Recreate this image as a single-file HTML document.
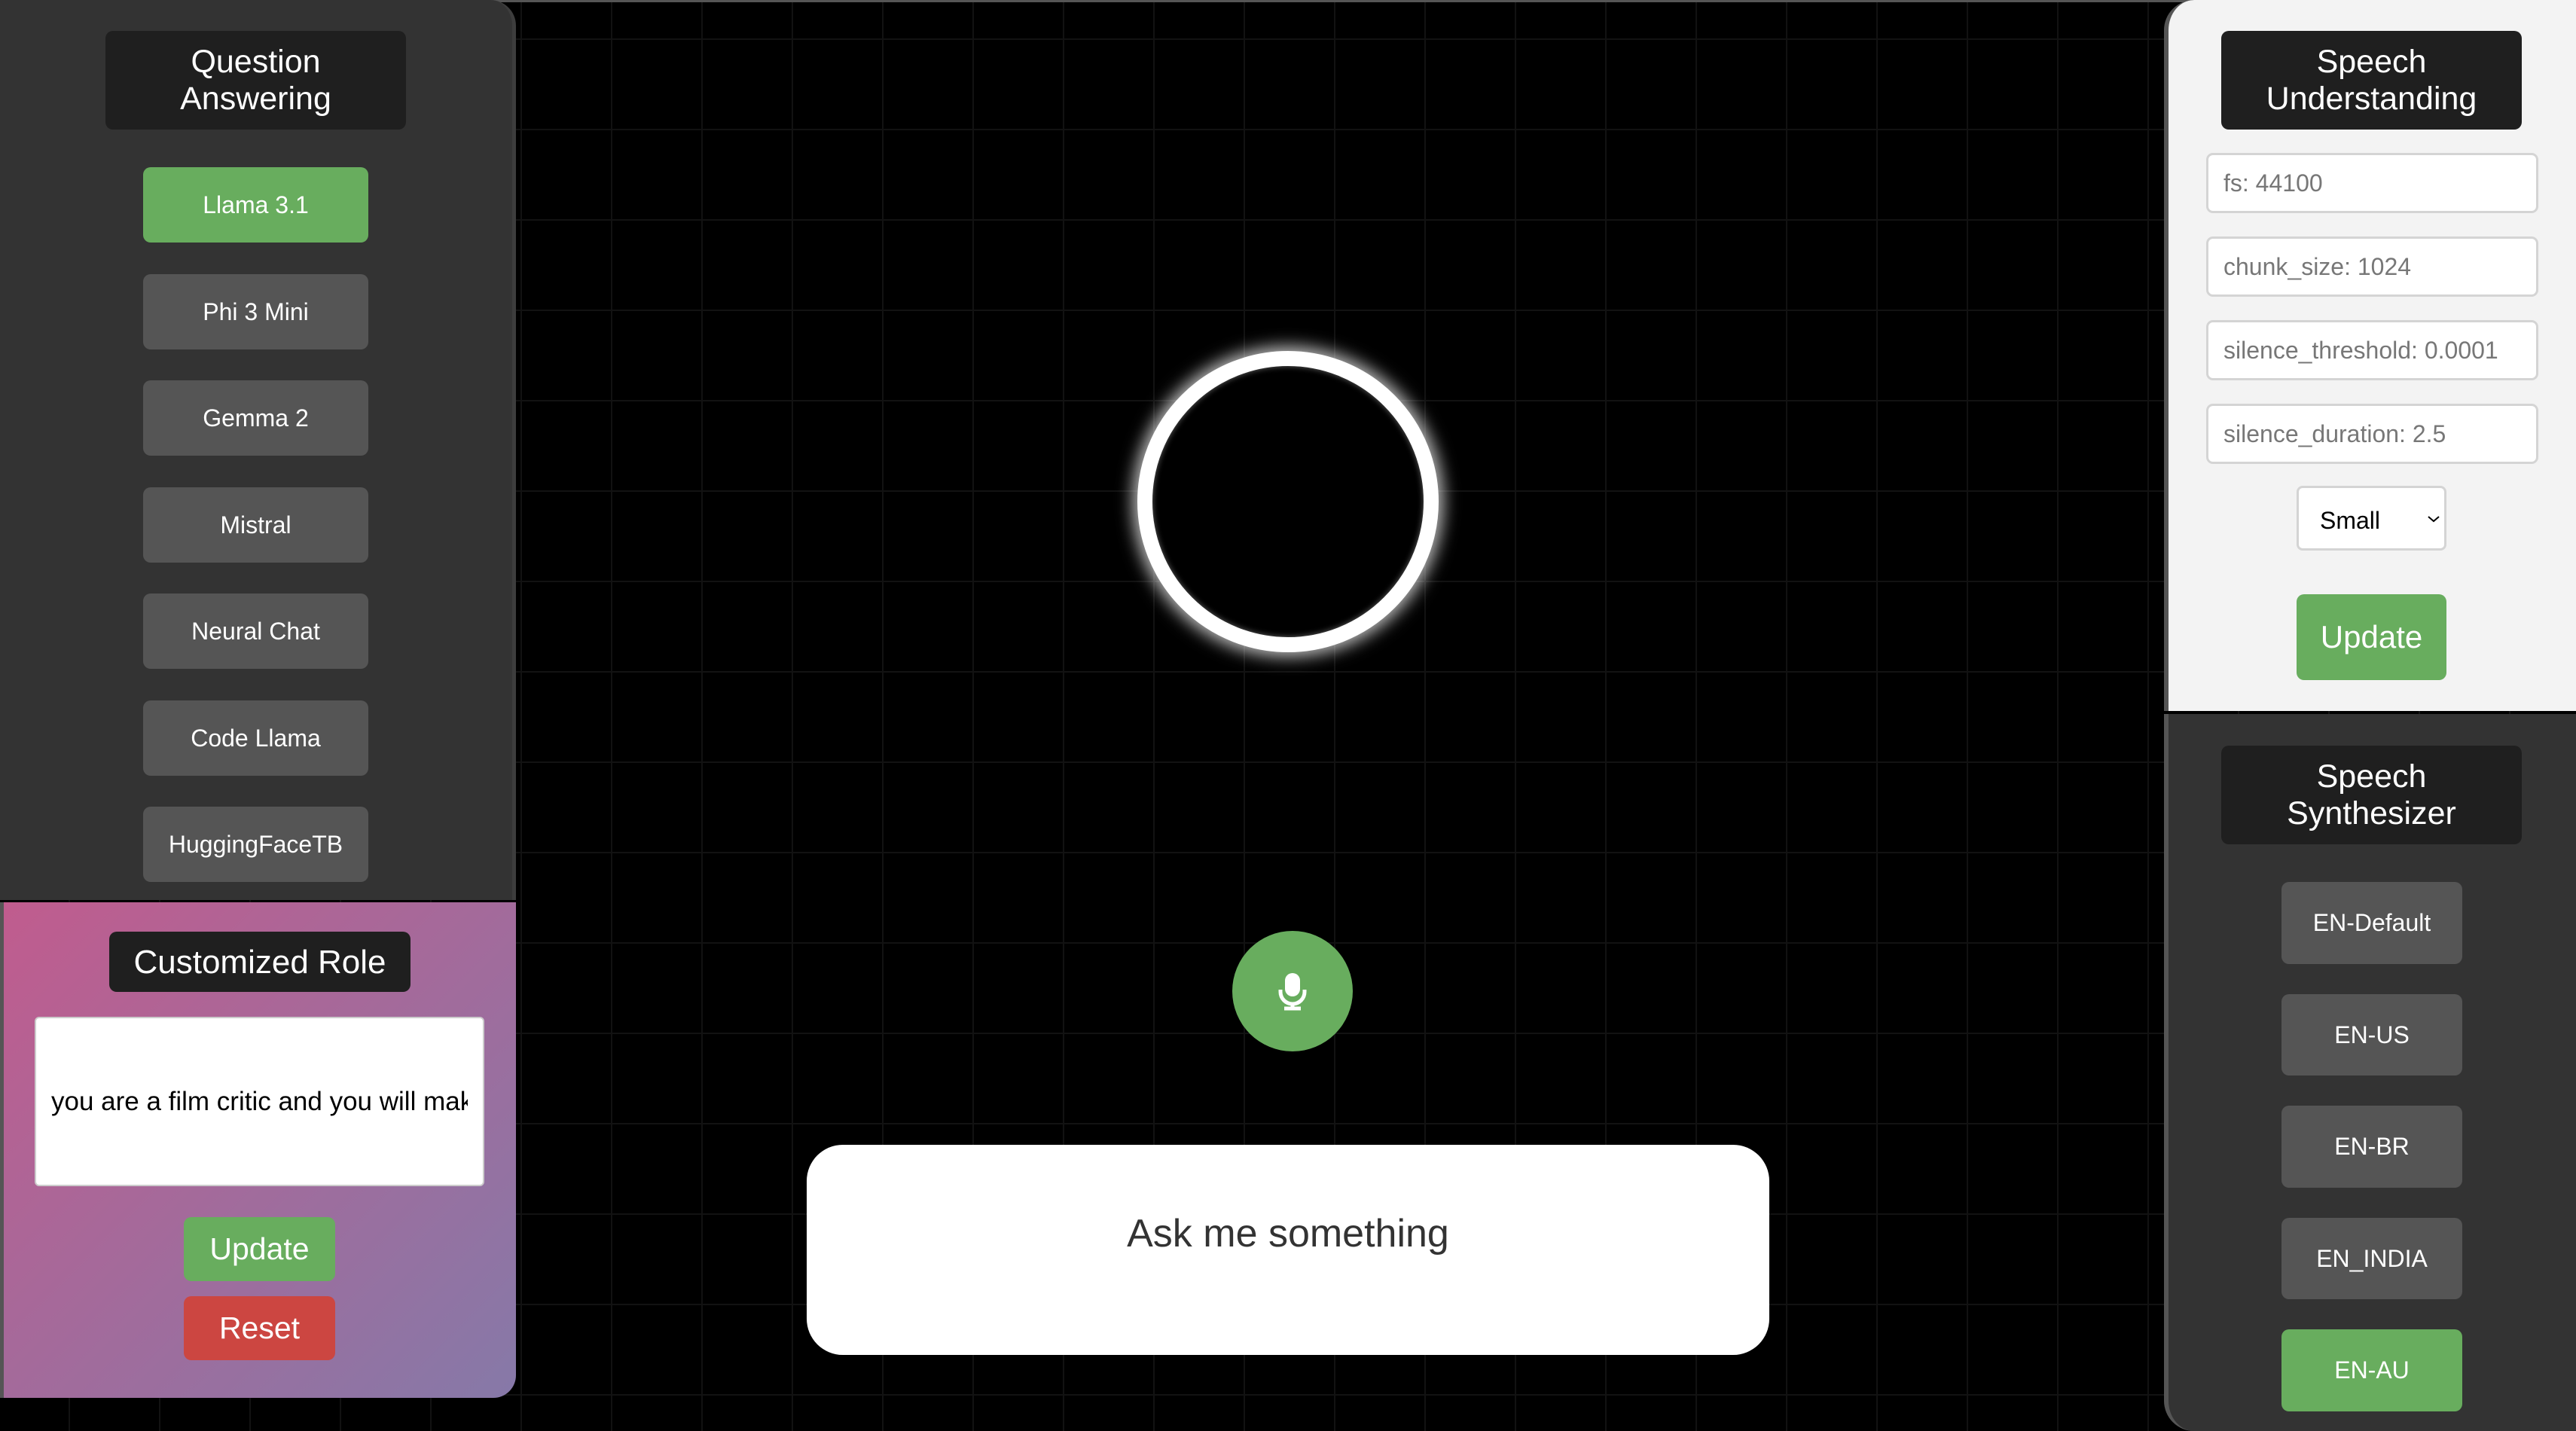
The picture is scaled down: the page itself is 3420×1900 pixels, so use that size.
<!DOCTYPE html>
<html><head><meta charset="utf-8"><style>
*{box-sizing:border-box;margin:0;padding:0}
body{width:3420px;height:1900px;overflow:hidden;background:#000;font-family:"Liberation Sans",Arial,sans-serif;position:relative;
background-image:linear-gradient(#121212 2px,transparent 2px),linear-gradient(90deg,#121212 2px,transparent 2px);background-size:120px 120px;background-position:91px 51px}
.abs{position:absolute}
.title{position:absolute;background:#1f1f1f;color:#fff;border-radius:10px;display:flex;align-items:center;justify-content:center;text-align:center;font-size:43px;line-height:49px}
.btn{position:absolute;border-radius:10px;color:#fff;display:flex;align-items:center;justify-content:center;font-size:32px}
.g{background:#68ad5e}.d{background:#555}
.inp{position:absolute;left:2929px;width:441px;height:80px;background:#fff;border:3px solid #d4d4d4;border-radius:9px;color:#777;font-size:32px;padding-left:20px;display:flex;align-items:center}
</style></head><body>
<div class="abs" style="left:0;top:0;width:3420px;height:3px;background:#555"></div>
<div class="abs" style="left:0;top:0;width:685px;height:1195px;background:#333;border-top-right-radius:34px;border-right:5px solid #3d3d3d"></div>
<div class="title" style="left:140px;top:41px;width:399px;height:131px">Question<br>Answering</div>
<div class="btn g" style="left:190px;top:222px;width:299px;height:100px">Llama 3.1</div>
<div class="btn d" style="left:190px;top:364px;width:299px;height:100px">Phi 3 Mini</div>
<div class="btn d" style="left:190px;top:505px;width:299px;height:100px">Gemma 2</div>
<div class="btn d" style="left:190px;top:647px;width:299px;height:100px">Mistral</div>
<div class="btn d" style="left:190px;top:788px;width:299px;height:100px">Neural Chat</div>
<div class="btn d" style="left:190px;top:930px;width:299px;height:100px">Code Llama</div>
<div class="btn d" style="left:190px;top:1071px;width:299px;height:100px">HuggingFaceTB</div>
<div class="abs" style="left:0;top:1198px;width:685px;height:658px;background:linear-gradient(135deg,#c05c8e,#8679a8);border-bottom-right-radius:30px;border-left:5px solid #555"></div>
<div class="title" style="left:145px;top:1237px;width:400px;height:80px;font-size:44px">Customized Role</div>
<div class="abs" style="left:46px;top:1350px;width:597px;height:225px;background:#fff;border:2px solid #ccc;border-radius:6px;padding:0 20px"><div style="overflow:hidden;white-space:nowrap;font-size:35px;line-height:221px;color:#000">you are a film critic and you will make</div></div>
<div class="btn g" style="left:244px;top:1616px;width:201px;height:85px;font-size:41px">Update</div>
<div class="btn" style="left:244px;top:1721px;width:201px;height:85px;font-size:41px;background:#cc4641">Reset</div>
<div class="abs" style="left:1510px;top:466px;width:400px;height:400px;border-radius:50%;border:20px solid #fff;box-shadow:0 0 22px 6px rgba(255,255,255,.75),inset 0 0 8px rgba(255,255,255,.4);background:#000"></div>
<div class="abs" style="left:1636px;top:1236px;width:160px;height:160px;border-radius:50%;background:#68ad5e"></div>
<svg class="abs" style="left:1695px;top:1290px" width="42" height="52" viewBox="0 0 42 52"><rect x="11" y="2" width="20" height="31" rx="10" fill="#fff"/><path d="M5 24 v3 a16 16 0 0 0 32 0 v-3" fill="none" stroke="#fff" stroke-width="5"/><path d="M21 43 v6 M10 49 h22" stroke="#fff" stroke-width="5"/></svg>
<div class="abs" style="left:1071px;top:1520px;width:1278px;height:279px;background:#fff;border-radius:48px;text-align:center;font-size:52px;color:#333;padding-top:88px">Ask me something</div>
<div class="abs" style="left:2873px;top:0;width:547px;height:944px;background:#f3f3f3;border-left:6px solid #555;border-top-left-radius:40px"></div>
<div class="title" style="left:2949px;top:41px;width:399px;height:131px">Speech<br>Understanding</div>
<div class="inp" style="top:203px">fs: 44100</div>
<div class="inp" style="top:314px">chunk_size: 1024</div>
<div class="inp" style="top:425px">silence_threshold: 0.0001</div>
<div class="inp" style="top:536px">silence_duration: 2.5</div>
<div class="abs" style="left:3049px;top:645px;width:199px;height:86px;background:#fff;border:3px solid #d4d4d4;border-radius:8px;font-size:32px;color:#000;padding:25px 0 0 28px">Small<svg class="abs" style="left:171px;top:36px" width="16" height="10"><path d="M1 2 L8 8 L15 2" fill="none" stroke="#000" stroke-width="2"/></svg></div>
<div class="btn g" style="left:3049px;top:789px;width:199px;height:114px;font-size:42px">Update</div>
<div class="abs" style="left:2873px;top:948px;width:547px;height:952px;background:#333;border-left:6px solid #555;border-bottom-left-radius:40px"></div>
<div class="title" style="left:2949px;top:990px;width:399px;height:131px">Speech<br>Synthesizer</div>
<div class="btn d" style="left:3029px;top:1171px;width:240px;height:109px">EN-Default</div>
<div class="btn d" style="left:3029px;top:1320px;width:240px;height:108px">EN-US</div>
<div class="btn d" style="left:3029px;top:1468px;width:240px;height:109px">EN-BR</div>
<div class="btn d" style="left:3029px;top:1617px;width:240px;height:108px">EN_INDIA</div>
<div class="btn g" style="left:3029px;top:1765px;width:240px;height:109px">EN-AU</div>
</body></html>
